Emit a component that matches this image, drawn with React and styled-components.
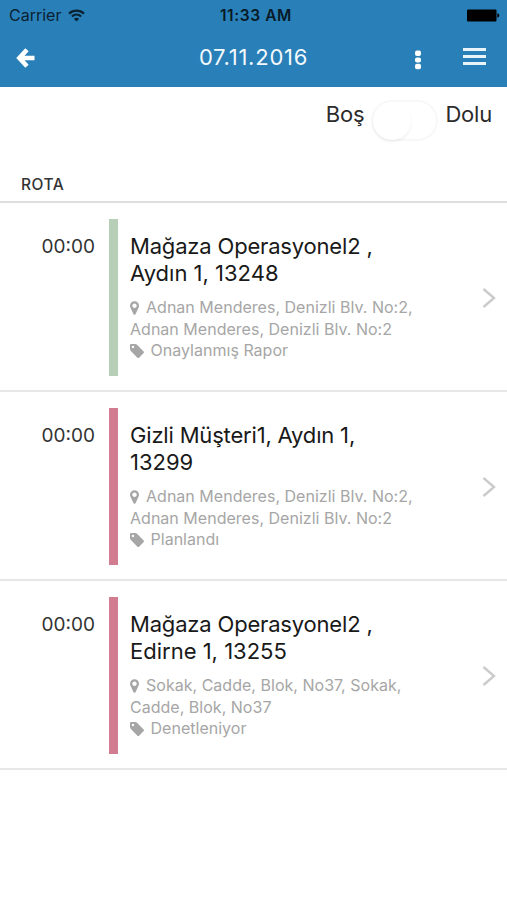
import React from 'react';
import styled, { createGlobalStyle } from 'styled-components';

const visits = [
  {
    time: '00:00',
    color: '#b7cfb6',
    title: ['Mağaza Operasyonel2 ,', 'Aydın 1, 13248'],
    address: ['Adnan Menderes, Denizli Blv. No:2,', 'Adnan Menderes, Denizli Blv. No:2'],
    status: 'Onaylanmış Rapor',
  },
  {
    time: '00:00',
    color: '#d27c92',
    title: ['Gizli Müşteri1, Aydın 1,', '13299'],
    address: ['Adnan Menderes, Denizli Blv. No:2,', 'Adnan Menderes, Denizli Blv. No:2'],
    status: 'Planlandı',
  },
  {
    time: '00:00',
    color: '#d27c92',
    title: ['Mağaza Operasyonel2 ,', 'Edirne 1, 13255'],
    address: ['Sokak, Cadde, Blok, No37, Sokak,', 'Cadde, Blok, No37'],
    status: 'Denetleniyor',
  },
];

function MarkerIcon() {
  return (
    <svg width="9" height="14" viewBox="0 0 1024 1536">
      <path
        fill="currentColor"
        transform="matrix(1 0 0 -1 0 1408)"
        d="M768 896q0 106 -75 181t-181 75t-181 -75t-75 -181t75 -181t181 -75t181 75t75 181zM1024 896q0 -109 -33 -179l-364 -774q-16 -33 -47.5 -52t-67.5 -19t-67.5 19t-46.5 52l-365 774q-33 70 -33 179q0 212 150 362t362 150t362 -150t150 -362z"
      />
    </svg>
  );
}

function TagIcon() {
  return (
    <svg width="14" height="14" viewBox="0 0 1515 1515">
      <path
        fill="currentColor"
        transform="matrix(1 0 0 -1 0 1408)"
        d="M448 1088q0 53 -37.5 90.5t-90.5 37.5t-90.5 -37.5t-37.5 -90.5t37.5 -90.5t90.5 -37.5t90.5 37.5t37.5 90.5zM1515 512q0 -53 -37 -90l-491 -492q-39 -37 -91 -37q-53 0 -90 37l-715 716q-38 37 -64.5 101t-26.5 117v416q0 52 38 90t90 38h416q53 0 117 -26.5t102 -64.5l715 -714q37 -39 37 -91z"
      />
    </svg>
  );
}

function Visit({ visit }) {
  return (
    <Row>
      <Time>{visit.time}</Time>
      <Stripe $color={visit.color} />
      <Info>
        <Title>
          {visit.title[0]}
          <br />
          {visit.title[1]}
        </Title>
        <Meta>
          <MetaLine $gap="7px">
            <MarkerIcon />
            {visit.address[0]}
          </MetaLine>
          <MetaLine>{visit.address[1]}</MetaLine>
          <MetaLine $gap="6.5px">
            <TagIcon />
            {visit.status}
          </MetaLine>
        </Meta>
      </Info>
      <Chevron width="14" height="20" viewBox="0 0 14 20">
        <path d="M1.5 1L12 10L1.5 19" fill="none" stroke="#cbcbcb" strokeWidth="2.4" />
      </Chevron>
    </Row>
  );
}

function App() {
  return (
    <Screen>
      <GlobalStyle />
      <Header>
        <StatusBar>
          <Carrier>
            Carrier
            <svg width="17" height="13" viewBox="0 0 17 13" fill="none" stroke="currentColor">
              <path d="M1 4.6C5.2 0.6 11.8 0.6 16 4.6" strokeWidth="2.3" />
              <path d="M3.9 7.5C6.6 5 10.4 5 13.1 7.5" strokeWidth="2.2" />
              <path d="M8.5 12.5L5.9 9.8C7.4 8.5 9.6 8.5 11.1 9.8Z" fill="currentColor" stroke="none" />
            </svg>
          </Carrier>
          <Clock>11:33 AM</Clock>
          <Battery width="33" height="13" viewBox="0 0 33 13">
            <rect x="0" y="0.5" width="29.5" height="12" rx="1" />
            <path d="M30.3 4.2Q32.3 4.6 32.3 6.5T30.3 8.8Z" />
          </Battery>
        </StatusBar>
        <NavBar>
          <BackButton aria-label="Geri">
            <svg width="19" height="20" viewBox="0 0 19 20" fill="none" stroke="#fff" strokeWidth="4.6">
              <path d="M11 1.8L3.4 10L11 18.2M4.5 10H18.5" />
            </svg>
          </BackButton>
          <PageTitle>07.11.2016</PageTitle>
          <Actions>
            <svg width="6" height="20" viewBox="0 0 6 20" fill="#fff">
              <rect x="0" y="0.6" width="6" height="5.4" rx="2" />
              <rect x="0" y="7.4" width="6" height="5" rx="2" />
              <rect x="0" y="13.8" width="6" height="5.4" rx="2" />
            </svg>
            <MenuLines>
              <i />
              <i />
              <i />
            </MenuLines>
          </Actions>
        </NavBar>
      </Header>
      <Filter>
        <FilterLabel>Boş</FilterLabel>
        <Switch>
          <Knob />
        </Switch>
        <FilterLabel>Dolu</FilterLabel>
      </Filter>
      <SectionTitle>ROTA</SectionTitle>
      {visits.map((visit, index) => (
        <Visit key={index} visit={visit} />
      ))}
    </Screen>
  );
}

export default App;

const GlobalStyle = createGlobalStyle`
    * {
        box-sizing: border-box;
    }
    body {
        margin: 0;
        background-color: #fff;
        font-family: Inter, "Liberation Sans", sans-serif;
    }
    svg {
        display: block;
        flex-shrink: 0;
    }
`

const Screen = styled.div`
    width: 100%;
    height: 900px;
    overflow: hidden;
    background-color: #fff;
`;

const Header = styled.header`
    height: 87px;
    background-color: #2980b9;
`;

const StatusBar = styled.div`
    height: 30px;
    display: grid;
    grid-template-columns: 1fr auto 1fr;
    align-items: center;
    padding: 0 7px 0 9px;
    color: #0a2231;
`;

const Carrier = styled.div`
    display: flex;
    align-items: center;
    gap: 7px;
    font-size: 16px;
    letter-spacing: 0;
`;

const Clock = styled.div`
    margin-left: 3px;
    font-size: 15.5px;
    font-weight: 600;
    letter-spacing: 0.6px;
    white-space: nowrap;
    color: #071a26;
`;

const Battery = styled.svg`
    justify-self: end;
    fill: #000;
`;

const NavBar = styled.div`
    height: 57px;
    display: grid;
    grid-template-columns: 1fr auto 1fr;
    align-items: start;
    padding: 0 21px 0 16px;
`;

const BackButton = styled.button`
    width: 19px;
    margin-top: 18px;
    padding: 0;
    border: 0;
    background: none;
`;

const PageTitle = styled.h1`
    margin: 14px 0 0 5px;
    font-size: 22px;
    line-height: 27px;
    font-weight: 400;
    letter-spacing: 0.75px;
    color: #f2f8fc;
`;

const Actions = styled.div`
    display: flex;
    justify-content: flex-end;
    gap: 42px;
    padding-top: 20px;
`;

const MenuLines = styled.div`
    width: 23px;
    display: flex;
    flex-direction: column;
    gap: 4px;
    margin-top: -2px;

    i {
        height: 3px;
        background-color: #e8f3fa;
    }
`;

const Filter = styled.div`
    height: 77px;
    display: flex;
    justify-content: flex-end;
    align-items: flex-start;
    padding: 13px 15px 0 0;
`;

const FilterLabel = styled.span`
    font-size: 22px;
    line-height: 28px;
    letter-spacing: -0.2px;
    color: #2b2b2b;
`;

const Switch = styled.div`
    width: 67px;
    height: 41px;
    margin: 0 7px;
    border: 2px solid #f8f8f8;
    border-radius: 21px;
`;

const Knob = styled.div`
    width: 38px;
    height: 38px;
    border-radius: 50%;
    background-color: #fff;
    box-shadow: 0 2px 3px rgba(0, 0, 0, 0.06);
`;

const SectionTitle = styled.h2`
    height: 39px;
    margin: 0;
    padding: 11px 0 0 21px;
    border-bottom: 2px solid #dedede;
    font-size: 15.5px;
    line-height: 20px;
    font-weight: 500;
    letter-spacing: 0.5px;
    color: #333;
`;

const Row = styled.div`
    height: 189px;
    display: flex;
    align-items: flex-start;
    padding: 16px 11px 0 0;
    border-bottom: 2px solid #e7e7e7;
`;

const Time = styled.div`
    width: 109px;
    padding: 15px 14px 0 0;
    text-align: right;
    font-size: 19px;
    line-height: 26px;
    color: #333;
`;

const Stripe = styled.div`
    width: 9px;
    height: 157px;
    background-color: ${props => props.$color};
`;

const Info = styled.div`
    flex: 1;
    padding: 14px 0 0 12px;
    white-space: nowrap;
`;

const Title = styled.h3`
    margin: 0;
    font-size: 22px;
    line-height: 27px;
    font-weight: 400;
    color: #191919;

    &::first-line {
        letter-spacing: -0.18px;
    }
`;

const Meta = styled.div`
    margin-top: 10px;
    font-size: 16px;
    line-height: 21.5px;
    letter-spacing: 0.02px;
    color: #a6a6a6;
`;

const MetaLine = styled.div`
    height: 21.5px;
    display: flex;
    align-items: center;
    gap: ${props => props.$gap || 0};
`;

const Chevron = styled.svg`
    margin-top: 69px;
`;
